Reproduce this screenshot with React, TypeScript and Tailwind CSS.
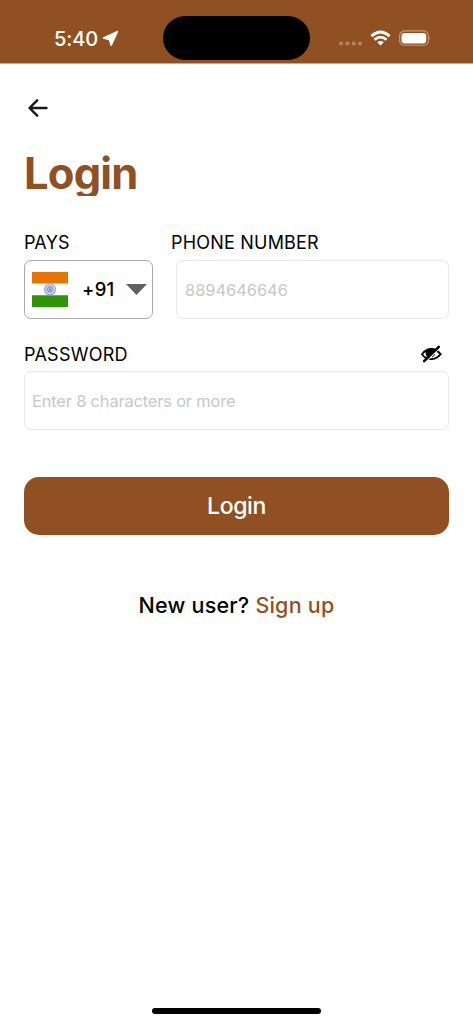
import React from "react";

function StatusBar() {
  return (
    <header className="flex h-16 shrink-0 border-b border-[#c9a88e] bg-[#905022] text-white">
      <div className="flex h-[22px] w-[108px] items-center pl-[54px] mt-[28px] text-[20px] font-medium leading-[22px] tracking-[-0.1px]">
        5:40
      </div>
      <svg className="-ml-[6px] mt-[30px] h-[18px] w-[18px]" viewBox="0 0 18 18" fill="#fff" stroke="#fff" strokeWidth="1.6" strokeLinejoin="round">
        <path d="M1.6 8 15.3 1.6 9.2 15.2 7.6 9.8Z" />
      </svg>
      <div className="ml-[43px] mt-4 h-[43.5px] w-[147px] rounded-full bg-black" />
      <svg className="ml-[28px] mt-[40px] h-[6px] w-6" viewBox="0 0 24 6" fill="#b28568">
        <circle cx="3" cy="3.4" r="2" /><circle cx="9.4" cy="3.4" r="2" />
        <circle cx="15.7" cy="3.4" r="2" /><circle cx="22" cy="3.4" r="2" />
      </svg>
      <svg className="ml-[8px] mt-[30px] h-[17px] w-[21px]" viewBox="0 0 21 17" fill="none" stroke="#fff" strokeWidth="2.8">
        <path d="M1.4 6.1Q10.5-2.1 19.6 6.1M4.5 9.7Q10.5 4.5 16.5 9.7" />
        <path d="M7.2 12.2Q10.5 9.6 13.8 12.2L10.5 15.6Z" fill="#fff" stroke="none" />
      </svg>
      <svg className="ml-[8px] mt-[30px] h-[17px] w-8" viewBox="0 0 32 17" fill="none">
        <rect x=".6" y=".9" width="28.8" height="14.4" rx="4.8" stroke="#c39a7c" strokeWidth="1.1" />
        <rect x="2.5" y="2.9" width="24.7" height="10.5" rx="3" fill="#fff" />
        <path d="M30.5 6Q32 8 30.5 10.4Z" fill="#c39a7c" />
      </svg>
    </header>
  );
}

function Flag() {
  return (
    <svg className="h-[35px] w-[36px]" viewBox="0 0 36 35">
      <path fill="#fff" d="M0 0h36v35H0z" />
      <path fill="#e87502" d="M0 0h36v11.5H0z" />
      <path fill="#309404" d="M0 23.3h36V35H0z" />
      <circle cx="18" cy="17.4" r="5.4" fill="#cbd5eb" stroke="#8ea5d5" strokeWidth="1.2" />
      <circle cx="18" cy="17.4" r="2.7" fill="#b3c1e2" stroke="#7189c5" />
      <circle cx="18" cy="17.4" r="1" fill="#6079bd" />
    </svg>
  );
}

function HiddenEye() {
  return (
    <svg className="h-[20px] w-[22px]" viewBox="0 0 22 20" fill="none">
      <path d="M2 9.2Q6 4 11 4T20.7 9.2Q16.5 14.2 11 14.2T2 9.2Z" stroke="#000" strokeWidth="1.8" />
      <path d="M6.2 5Q10.8 2.7 15.5 4L7.7 13Q4.2 8.6 6.2 5Z" fill="#000" />
      <path d="m5.6 17.1 14-14" stroke="#fff" strokeWidth="1.2" />
      <path d="M4.1 16.2 18.8 1.8" stroke="#000" strokeWidth="2.5" strokeLinecap="round" />
      <path d="m12 12.2 3-2.8" stroke="#000" strokeWidth="1" />
    </svg>
  );
}

export default function App() {
  return (
    <main className="flex h-[1024px] w-[473px] flex-col overflow-hidden bg-white font-['Inter',sans-serif] text-black">
      <StatusBar />
      <div className="flex flex-1 flex-col px-6">
        <button className="mt-[34px] ml-[4px] h-[20px] w-[20px]" aria-label="Back">
          <svg viewBox="0 0 20 20" className="h-5 w-5" fill="none" stroke="#17171a" strokeWidth="2.4" strokeLinecap="round" strokeLinejoin="round">
            <path d="M18.5 10H1.8M9.2 2.3 1.5 10l7.7 7.7" />
          </svg>
        </button>
        <h1 className="mt-[28px] h-[50px] w-[200px] overflow-hidden text-[43.5px] font-bold leading-[55px] tracking-[-0.8px] text-[#905022]">Login</h1>
        <div className="mt-[35px] flex h-6 text-[18px] leading-6">
          <label className="w-[147px] tracking-[0.2px]">PAYS</label>
          <label className="tracking-[0.2px]">PHONE NUMBER</label>
        </div>
        <div className="mt-[5px] flex h-[59px] gap-[23px]">
          <button className="flex w-[129px] items-center rounded-[7px] border border-[#a9a9a9] pl-[7px]">
            <Flag />
            <span className="ml-[14px] w-[44px] text-left text-[18.5px] font-medium tracking-[0.3px]">+91</span>
            <svg className="h-[11px] w-[21px]" viewBox="0 0 21 11"><path d="M0 0h21L10.5 11Z" fill="#606060" /></svg>
          </button>
          <input aria-label="Phone number" placeholder="8894646646" className="h-[59px] w-[273px] rounded-[7px] border border-[#e8e8e8] px-2 text-[16.4px] outline-none placeholder:text-[#c7c7c7]" />
        </div>
        <div className="mt-[24px] flex h-6 items-center justify-between pr-[7px]">
          <label className="text-[18px] leading-6 tracking-[0.25px]">PASSWORD</label>
          <HiddenEye />
        </div>
        <input aria-label="Password" placeholder="Enter 8 characters or more" className="mt-[4px] h-[59px] w-full shrink-0 rounded-[7px] border border-[#e8e8e8] px-[7px] text-[16.4px] tracking-[-0.15px] outline-none placeholder:text-[#c7c7c7]" />
        <button className="mt-[47px] h-[58px] w-full shrink-0 rounded-[15px] bg-[#905022] text-[23px] font-medium tracking-[-0.35px] text-white">Login</button>
        <p className="mt-[54px] flex h-8 items-center justify-center whitespace-pre text-[21.5px] font-medium tracking-[0.22px]">New user? <a className="text-[#905022]">Sign up</a></p>
      </div>
      <div className="mx-auto mb-[10px] h-[6px] w-[169px] rounded-full bg-black" />
    </main>
  );
}
